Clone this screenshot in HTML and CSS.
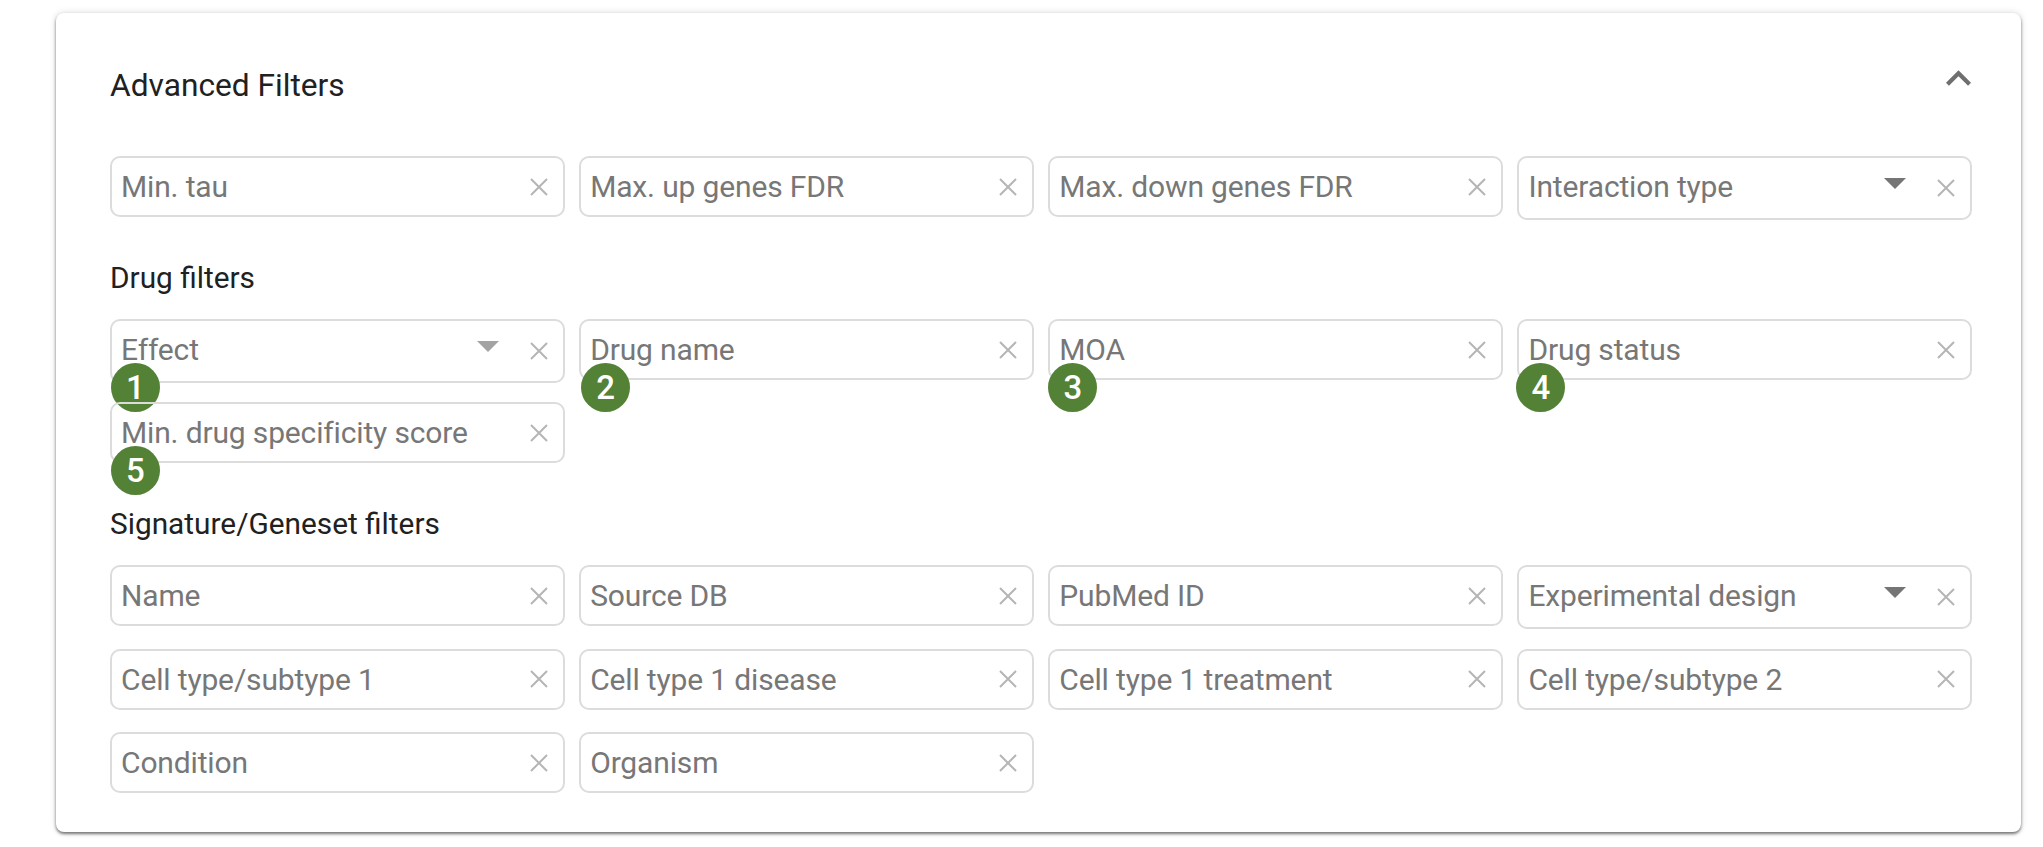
FILE: index.html
```html
<!DOCTYPE html>
<html lang="en">
<head>
    <meta charset="UTF-8">
    <title>Advanced Filters</title>
    <link rel="stylesheet" href="styles.css">
</head>
<body>
    <svg class="icon-defs" width="0" height="0" aria-hidden="true">
        <symbol id="clear" viewBox="0 0 18 18">
            <path d="M1 1L17 17M17 1L1 17" fill="none" stroke="currentColor" stroke-width="2"/>
        </symbol>
        <symbol id="caret" viewBox="0 0 22 11">
            <path d="M0 0H22L11 11Z" fill="currentColor"/>
        </symbol>
    </svg>

    <section class="card">
        <header class="card-header">
            <h2>Advanced Filters</h2>
            <svg class="chevron" viewBox="6 8 12 7.41"><path d="M12 8l-6 6 1.41 1.41L12 10.83l4.59 4.58L18 14z"/></svg>
        </header>

        <div class="filter-grid">
            <div class="field"><span class="placeholder">Min. tau</span><svg class="clear"><use href="#clear"/></svg></div>
            <div class="field"><span class="placeholder">Max. up genes FDR</span><svg class="clear"><use href="#clear"/></svg></div>
            <div class="field"><span class="placeholder">Max. down genes FDR</span><svg class="clear"><use href="#clear"/></svg></div>
            <div class="field select"><span class="placeholder">Interaction type</span><svg class="caret"><use href="#caret"/></svg><svg class="clear"><use href="#clear"/></svg></div>
        </div>

        <h3>Drug filters</h3>
        <div class="filter-grid">
            <div class="field select muted"><span class="placeholder">Effect</span><svg class="caret"><use href="#caret"/></svg><svg class="clear"><use href="#clear"/></svg><span class="badge badge-1">1</span></div>
            <div class="field"><span class="placeholder">Drug name</span><svg class="clear"><use href="#clear"/></svg><span class="badge badge-2">2</span></div>
            <div class="field"><span class="placeholder">MOA</span><svg class="clear"><use href="#clear"/></svg><span class="badge badge-3">3</span></div>
            <div class="field"><span class="placeholder">Drug status</span><svg class="clear"><use href="#clear"/></svg><span class="badge badge-4">4</span></div>
            <div class="field"><span class="placeholder">Min. drug specificity score</span><svg class="clear"><use href="#clear"/></svg><span class="badge badge-1">5</span></div>
        </div>

        <h3>Signature/Geneset filters</h3>
        <div class="filter-grid">
            <div class="field"><span class="placeholder">Name</span><svg class="clear"><use href="#clear"/></svg></div>
            <div class="field"><span class="placeholder">Source DB</span><svg class="clear"><use href="#clear"/></svg></div>
            <div class="field"><span class="placeholder">PubMed ID</span><svg class="clear"><use href="#clear"/></svg></div>
            <div class="field select"><span class="placeholder">Experimental design</span><svg class="caret"><use href="#caret"/></svg><svg class="clear"><use href="#clear"/></svg></div>
            <div class="field"><span class="placeholder">Cell type/subtype 1</span><svg class="clear"><use href="#clear"/></svg></div>
            <div class="field"><span class="placeholder">Cell type 1 disease</span><svg class="clear"><use href="#clear"/></svg></div>
            <div class="field"><span class="placeholder">Cell type 1 treatment</span><svg class="clear"><use href="#clear"/></svg></div>
            <div class="field"><span class="placeholder">Cell type/subtype 2</span><svg class="clear"><use href="#clear"/></svg></div>
            <div class="field"><span class="placeholder">Condition</span><svg class="clear"><use href="#clear"/></svg></div>
            <div class="field"><span class="placeholder">Organism</span><svg class="clear"><use href="#clear"/></svg></div>
        </div>
    </section>
</body>
</html>
```

FILE: styles.css
```css
/* Global Styles */
body {
    font-family: Roboto, "Noto Sans", sans-serif;
    margin: 0;
    padding: 13px 22px 15px 56px;
    background-color: #fff;
    color: #212121;
}

.icon-defs {
    position: absolute;
}

.card {
    height: 819px;
    box-sizing: border-box;
    padding: 0 49px 0 54px;
    background-color: #fff;
    border-radius: 8px;
    box-shadow: 0 2px 3px rgba(0, 0, 0, 0.5), 0 0 7px rgba(0, 0, 0, 0.15);
}

.card-header {
    display: flex;
    justify-content: space-between;
    height: 143px;
}

.card-header h2 {
    margin: 53px 0 0;
    font-size: 31.7px;
    line-height: 40px;
    font-weight: 400;
}

.chevron {
    width: 25px;
    height: 16px;
    margin: 57px 1px 0 0;
    fill: #6f6f6f;
}

h3 {
    margin: 41px 0 21px;
    font-size: 29.8px;
    line-height: 40px;
    font-weight: 400;
}

.filter-grid {
    display: grid;
    grid-template-columns: repeat(4, 1fr);
    grid-auto-rows: 61px;
    column-gap: 14.6px;
    row-gap: 22.4px;
    align-items: start;
}

.field {
    position: relative;
    display: flex;
    align-items: center;
    box-sizing: border-box;
    height: 61px;
    padding: 0 15px 0 9px;
    border: 2px solid #dcdcdc;
    border-radius: 10px;
}

.field.select {
    height: 64px;
}

.placeholder {
    flex: 1;
    font-size: 30px;
    letter-spacing: -0.15px;
    color: #777;
    white-space: nowrap;
}

.select .placeholder {
    margin-bottom: 3px;
}

.clear {
    width: 18px;
    height: 18px;
    color: #b5b5b5;
}

.caret {
    width: 22px;
    height: 11px;
    margin: 0 31px 10px 0;
    color: #757575;
}

.field.muted .caret {
    color: #a3a3a3;
}

.badge {
    position: absolute;
    top: 41.5px;
    width: 49px;
    height: 49px;
    border-radius: 50%;
    background-color: #538135;
    color: #fff;
    font-size: 33px;
    font-weight: 500;
    line-height: 49px;
    text-align: center;
}

.badge-1 {
    left: -1px;
}

.badge-2 {
    left: 0;
}

.badge-3 {
    left: -2px;
}

.badge-4 {
    left: -3px;
}
```
